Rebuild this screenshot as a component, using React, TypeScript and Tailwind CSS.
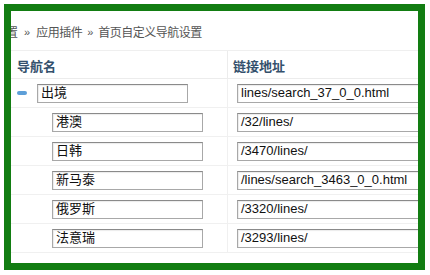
const rows = [
  { name: '出境', url: 'lines/search_37_0_0.html', top: true },
  { name: '港澳', url: '/32/lines/' },
  { name: '日韩', url: '/3470/lines/' },
  { name: '新马泰', url: '/lines/search_3463_0_0.html' },
  { name: '俄罗斯', url: '/3320/lines/' },
  { name: '法意瑞', url: '/3293/lines/' },
]

function Field({ value, className }: { value: string; className: string }) {
  return (
    <div
      className={`h-[19px] flex items-center pl-[3px] border border-[#a8a8a8] border-t-[#8a8a8a] shadow-[inset_1px_1px_1px_rgba(0,0,0,0.08)] text-[13px] text-[#111] whitespace-nowrap overflow-hidden bg-white ${className}`}
    >
      {value}
    </div>
  )
}

export default function App() {
  return (
    <div className="w-[430px] h-[275px] bg-white pt-[4px] pl-[4px] font-['Liberation_Sans','Noto_Sans_CJK_SC',sans-serif]">
      <div className="w-[421px] h-[266px] border-[7px] border-[#127d12] bg-white overflow-hidden">
        <div className="h-[40px] flex items-center pt-[4px] border-b border-[#efefef] text-[12px] text-[#555] whitespace-nowrap">
          <span className="ml-[-5px]">置</span>
          <span className="mx-[6px] text-[11px]">»</span>
          <span className="tracking-[-0.5px]">应用插件</span>
          <span className="mx-[5px] text-[11px]">»</span>
          <span className="tracking-[-0.5px]">首页自定义导航设置</span>
        </div>
        <div className="flex h-[28px] border-b border-[#ececec] text-[13px] font-bold text-[#34506c]">
          <div className="w-[217px] shrink-0 pl-[6px] pt-[4px] flex items-center border-r border-[#ececec]">导航名</div>
          <div className="pl-[5px] pt-[4px] flex items-center">链接地址</div>
        </div>
        {rows.map((r) => (
          <div key={r.name} className="flex h-[29px] border-b border-[#f0f0f0]">
            <div className="w-[217px] shrink-0 flex items-center border-r border-[#f0f0f0]">
              {r.top ? (
                <>
                  <span className="ml-[6px] w-[10px] h-[4px] rounded-[2px] bg-[#5d9fd8]" />
                  <Field value={r.name} className="ml-[10px] w-[151px]" />
                </>
              ) : (
                <Field value={r.name} className="ml-[41px] w-[151px]" />
              )}
            </div>
            <div className="flex items-center">
              <Field value={r.url} className="ml-[9px] w-[200px] shrink-0" />
            </div>
          </div>
        ))}
      </div>
    </div>
  )
}
